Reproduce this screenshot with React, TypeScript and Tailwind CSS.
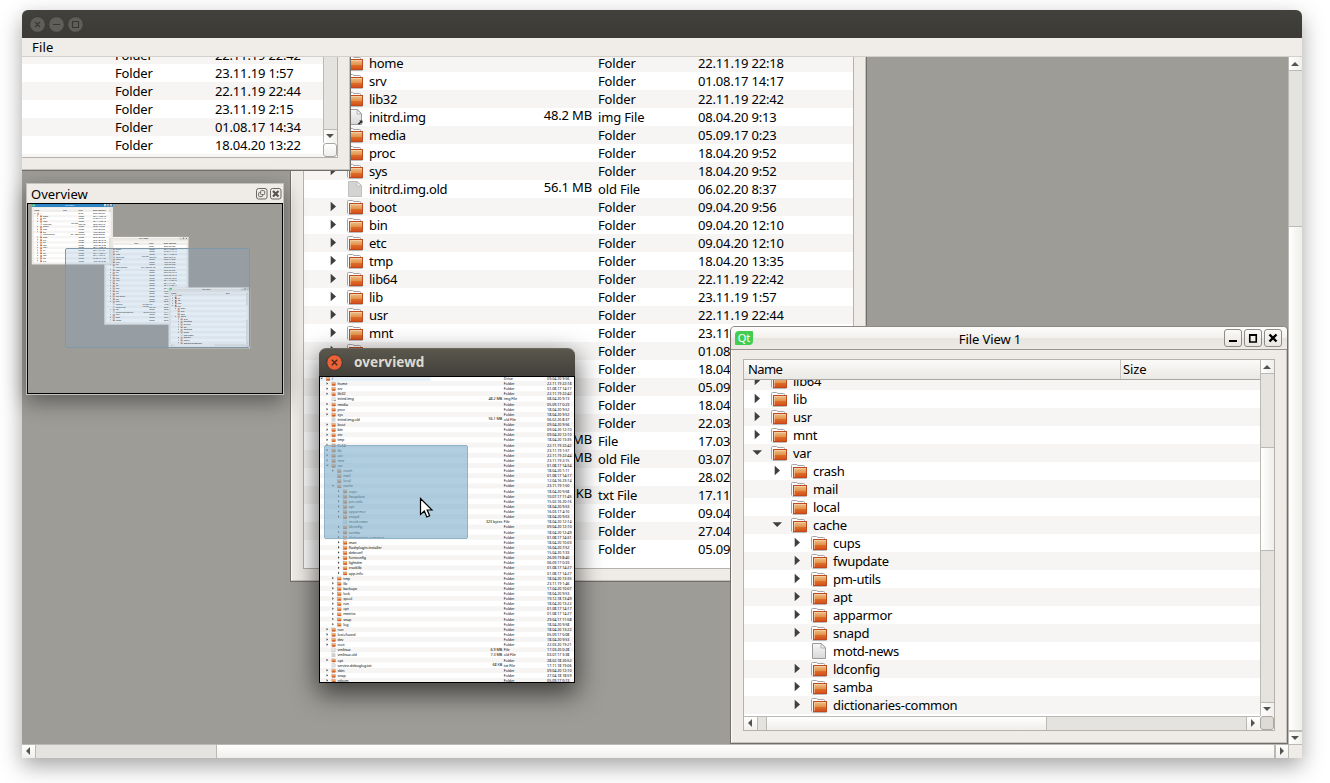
import React from "react";

type Kind = "folder" | "file" | "link" | "broken";
type Item = {
  name: string;
  date: string;
  level: number;
  kind: Kind;
  size: string;
  type: string;
  arrow: "closed" | "open" | "none";
};

function dir(name: string, date: string, level = 1, arrow: Item["arrow"] = "closed"): Item {
  return { name, date, level, kind: "folder", size: "", type: name === "/" ? "Drive" : "Folder", arrow };
}
function file(name: string, date: string, size: string, type: string, kind: Kind = "file", level = 1): Item {
  return { name, date, level, kind, size, type, arrow: "none" };
}

const head: Item[] = [
  dir("/", "09.04.20 9:56", 0, "open"),
  dir("home", "22.11.19 22:18"),
  dir("srv", "01.08.17 14:17"),
  dir("lib32", "22.11.19 22:42"),
  file("initrd.img", "08.04.20 9:13", "48.2 MB", "img File", "link"),
  dir("media", "05.09.17 0:23"),
  dir("proc", "18.04.20 9:52"),
  dir("sys", "18.04.20 9:52"),
  file("initrd.img.old", "06.02.20 8:37", "56.1 MB", "old File", "broken"),
  dir("boot", "09.04.20 9:56"),
  dir("bin", "09.04.20 12:10"),
  dir("etc", "09.04.20 12:10"),
  dir("tmp", "18.04.20 13:35"),
  dir("lib64", "22.11.19 22:42"),
  dir("lib", "23.11.19 1:57"),
  dir("usr", "22.11.19 22:44"),
  dir("mnt", "23.11.19 2:15"),
];

const varChildren: Item[] = [
  dir("crash", "18.04.20 1:11", 2),
  dir("mail", "01.08.17 14:17", 2, "none"),
  dir("local", "12.04.16 23:14", 2, "none"),
  dir("cache", "23.11.19 1:50", 2, "open"),
  dir("cups", "18.04.20 9:58", 3),
  dir("fwupdate", "10.07.17 11:45", 3),
  dir("pm-utils", "15.02.16 20:16", 3),
  dir("apt", "18.04.20 9:53", 3),
  dir("apparmor", "16.03.17 4:10", 3),
  dir("snapd", "18.04.20 9:53", 3),
  file("motd-news", "18.04.20 12:14", "323 bytes", "File", "file", 3),
  dir("ldconfig", "09.04.20 12:10", 3),
  dir("samba", "18.04.20 12:49", 3),
  dir("dictionaries-common", "01.08.17 14:31", 3),
  dir("man", "18.04.20 10:03", 3),
  dir("flashplugin-installer", "16.04.20 7:52", 3),
  dir("debconf", "15.04.20 7:33", 3),
  dir("fontconfig", "26.09.19 8:40", 3),
  dir("lightdm", "06.09.17 0:33", 3),
  dir("cracklib", "01.08.17 14:27", 3),
  dir("app-info", "01.08.17 14:27", 3),
  dir("tmp", "18.04.20 13:35", 2),
  dir("lib", "23.11.19 1:46", 2),
  dir("backups", "17.04.20 10:07", 2),
  dir("lock", "18.04.20 9:53", 2),
  dir("spool", "19.12.18 13:49", 2),
  dir("run", "18.04.20 13:22", 2),
  dir("opt", "01.08.17 14:17", 2),
  dir("metrics", "01.08.17 14:27", 2),
  dir("snap", "29.04.17 11:58", 2),
  dir("log", "18.04.20 9:58", 2),
];

const tail: Item[] = [
  dir("run", "18.04.20 13:22"),
  dir("lost+found", "05.09.17 0:08"),
  dir("dev", "18.04.20 9:53"),
  dir("root", "22.03.20 19:21"),
  file("vmlinuz", "17.03.20 0:28", "6.9 MB", "File"),
  file("vmlinuz.old", "03.07.17 3:38", "7.3 MB", "old File", "broken"),
  dir("opt", "28.02.18 20:52"),
  file("service-debuglog.txt", "17.11.18 19:06", "68 KB", "txt File"),
  dir("sbin", "09.04.20 12:10"),
  dir("snap", "27.04.18 18:59"),
  dir("cdrom", "05.09.17 0:13"),
];

const collapsed: Item[] = [...head, dir("var", "01.08.17 14:34"), ...tail];
const expanded: Item[] = [...head, dir("var", "01.08.17 14:34", 1, "open"), ...varChildren, ...tail];

function Gradients() {
  return (
    <svg width="0" height="0" className="absolute">
      <defs>
        <linearGradient id="folderFront" x1="0" y1="0" x2="0" y2="1">
          <stop offset="0" stopColor="#efc28c" />
          <stop offset="0.5" stopColor="#e2954f" />
          <stop offset="0.58" stopColor="#db6f2a" />
          <stop offset="1" stopColor="#d84a18" />
        </linearGradient>
        <linearGradient id="paper" x1="0" y1="0" x2="0" y2="1">
          <stop offset="0" stopColor="#f7f7f7" />
          <stop offset="1" stopColor="#d8d8d8" />
        </linearGradient>
      </defs>
    </svg>
  );
}

function ItemIcon({ kind }: { kind: Kind }) {
  if (kind === "folder") {
    return (
      <svg width="16" height="18" viewBox="0 -2 16 18" className="shrink-0">
        <path d="M1.5 14.5 H15.5" stroke="#8f8f8f" strokeOpacity="0.6" />
        <path d="M0.5 13.5 V1.5 Q0.5 0.5 1.5 0.5 H5.5 L7 1.5 H12.5 Q13.5 1.5 13.5 2.5 V4" fill="#fdfdfd" stroke="#a3a3a3" />
        <rect x="2.5" y="3.5" width="13" height="10" fill="url(#folderFront)" stroke="#c04a20" />
        <path d="M3.5 13 V4.5 H15" fill="none" stroke="#f6dfc0" strokeOpacity="0.55" />
      </svg>
    );
  }
  return (
    <svg width="16" height="16" viewBox="0 0 16 16" className="shrink-0">
      <path
        d="M1.5 0.5 H10.5 L14.5 4.5 V15.5 H1.5 Z"
        fill={kind === "broken" ? "#d3d3d1" : "url(#paper)"}
        stroke={kind === "broken" ? "#c0c0be" : "#9b9b9b"}
      />
      <path d="M10 0.5 L10 5 H14.5 Z" fill="#f4f4f4" stroke={kind === "broken" ? "#bbb" : "#a2a2a2"} strokeWidth="0.8" />
      {kind === "link" && <path d="M10.5 15 L13.2 12.4 L12.2 11.4 H15.5 V14.5 L14.4 13.5 L12.4 15.4 Z" fill="#2a2a2a" />}
    </svg>
  );
}

function RowArrow({ state }: { state: Item["arrow"] }) {
  return (
    <svg width="16" height="18" viewBox="0 0 16 18" className="shrink-0">
      {state === "closed" && <path d="M5.7 3.8 L11 8.5 L5.7 13.2 Z" fill="#3f3f3f" />}
      {state === "open" && <path d="M3.5 6.2 H13 L8.2 11 Z" fill="#3f3f3f" />}
    </svg>
  );
}

type TreeProps = { items: Item[]; typeX: number; dateX: number; selectRoot?: number };

function Tree({ items, typeX, dateX, selectRoot }: TreeProps) {
  return (
    <div className="text-[13px] leading-[18px] text-black">
      {items.map((it, i) => (
        <div key={i} className={i % 2 === 1 ? "flex h-[18px] bg-[#f6f5f4]" : "flex h-[18px] bg-white"}>
          <div
            className={
              i === 0 && selectRoot
                ? "flex h-[18px] shrink-0 items-center gap-[6px] bg-[#e6f0f8]"
                : "flex h-[18px] shrink-0 items-center gap-[6px]"
            }
            style={{ width: selectRoot && i === 0 ? selectRoot : typeX - 76, paddingLeft: 1 + it.level * 20 }}
          >
            <RowArrow state={it.arrow} />
            <ItemIcon kind={it.kind} />
            <span className="whitespace-nowrap tracking-[-0.28px]">{it.name}</span>
          </div>
          <div
            className="-mt-[2px] shrink-0 whitespace-nowrap text-right tracking-[-0.15px]"
            style={{ width: selectRoot && i === 0 ? typeX - 6 - selectRoot : 70 }}
          >
            {it.size}
          </div>
          <div className="ml-[6px] shrink-0 whitespace-nowrap tracking-[-0.17px]" style={{ width: dateX - typeX }}>
            {it.type}
          </div>
          <div className="shrink-0 whitespace-nowrap tracking-[-0.17px]">{it.date}</div>
        </div>
      ))}
    </div>
  );
}

const arrowPaths = {
  up: "M2 9 H10 L6 5 Z",
  down: "M2 4 H10 L6 8 Z",
  left: "M8 2 V10 L4 6 Z",
  right: "M4 2 V10 L8 6 Z",
};

function BarArrow({ to }: { to: keyof typeof arrowPaths }) {
  return (
    <svg width="13" height="13" viewBox="0 0 13 13" className="shrink-0">
      <path d={arrowPaths[to]} fill="#555350" />
    </svg>
  );
}

function VBar({ before, handle }: { before: number; handle: number }) {
  return (
    <div className="flex min-h-0 w-[14px] flex-1 flex-col border-l border-[#bbb9b4] bg-[#e4e3df]">
      <div className="h-[13px] shrink-0 bg-gradient-to-r from-white to-[#f0efec]">
        <BarArrow to="up" />
      </div>
      <div className="shrink-0 border-t border-[#bbb9b4]" style={{ height: before }} />
      <div
        className="shrink-0 border-t border-[#bbb9b4] bg-gradient-to-r from-white to-[#f0eeeb]"
        style={{ height: handle }}
      />
      <div className="flex-1 border-t border-[#bbb9b4]" />
      <div className="h-[14px] shrink-0 border-t border-[#bbb9b4] bg-gradient-to-r from-white to-[#f0efec]">
        <BarArrow to="down" />
      </div>
    </div>
  );
}

function HBar({ before, handle }: { before: number; handle: number }) {
  return (
    <div className="flex h-[14px] min-w-0 flex-1 border-t border-[#bbb9b4] bg-[#e4e3df]">
      <div className="w-[13px] shrink-0 bg-gradient-to-b from-white to-[#f0efec]">
        <BarArrow to="left" />
      </div>
      <div className="shrink-0 border-l border-[#bbb9b4]" style={{ width: before }} />
      <div
        className="shrink-0 border-l border-[#bbb9b4] bg-gradient-to-b from-white to-[#f0eeeb]"
        style={{ width: handle }}
      />
      <div className="flex-1 border-l border-[#bbb9b4]" />
      <div className="w-[14px] shrink-0 border-l border-[#bbb9b4] bg-gradient-to-b from-white to-[#f0efec]">
        <BarArrow to="right" />
      </div>
    </div>
  );
}

function CaptionButton({ d, width }: { d: string; width: number }) {
  return (
    <div className="flex h-[18px] w-[18px] items-center justify-center rounded-[3px] border border-[#8f8c87] bg-gradient-to-b from-[#fbfaf9] to-[#e9e6e1]">
      <svg width="16" height="16" viewBox="0 0 16 16">
        <path d={d} fill="none" stroke="#000" strokeWidth={width} />
      </svg>
    </div>
  );
}

type WindowProps = TreeProps & {
  title: string;
  x: number;
  y: number;
  w: number;
  h: number;
  nameW: number;
  listY: number;
  scrollX?: number;
  active?: boolean;
  vbar?: [number, number];
  hbar?: [number, number];
};

function HeaderCell({ text, w }: { text: string; w: number }) {
  return (
    <div
      className="shrink-0 overflow-hidden whitespace-nowrap border-l border-[#c9c6c2] pl-[2px] tracking-[-0.1px]"
      style={{ width: w }}
    >
      {text}
    </div>
  );
}

function FileWindow(p: WindowProps) {
  return (
    <div
      className="absolute flex flex-col rounded-t-[5px] border border-[#716e6c] border-t-[#8d8a86] bg-[#efebe7]"
      style={{ left: p.x, top: p.y, width: p.w, height: p.h }}
    >
      <div
        className={
          p.active
            ? "flex h-[23px] shrink-0 items-center rounded-t-[4px] border-b border-[#1d6ea8] bg-[#2f86c4] pl-[4px] pr-[5px] text-white"
            : "flex h-[23px] shrink-0 items-center rounded-t-[4px] border-b border-[#979490] bg-[linear-gradient(#fefdfc,#f3f0ed_48%,#e8e5e0_52%,#edeae6)] pl-[4px] pr-[5px]"
        }
      >
        <div className="-mt-[1px] flex h-[14px] w-[18px] items-center justify-center rounded-[1px] rounded-br-[4px] rounded-tl-[4px] bg-[#41cd52] text-[11px] leading-[14px] text-white">
          Qt
        </div>
        <div className="ml-[3px] mt-[1px] flex-1 text-center text-[13px] leading-[18px] tracking-[-0.1px]">{p.title}</div>
        <div className="flex gap-[2px]">
          <CaptionButton d="M4 11 H12" width={2} />
          <CaptionButton d="M4.75 4.75 H11.25 V12 H4.75 Z M4 5.2 H12" width={1.6} />
          <CaptionButton d="M4.5 4.5 L11.5 11.5 M11.5 4.5 L4.5 11.5" width={2.4} />
        </div>
      </div>
      <div className="flex min-h-0 flex-1 border-b border-l border-r border-[#c6c2be] border-l-[#fbfaf9] pb-[11px] pl-[11px] pr-[11px] pt-[9px]">
        <div className="flex min-w-0 flex-1 border border-[#b5b2ae] bg-white">
          <div className="flex min-w-0 flex-1 flex-col">
            <div className="flex h-[20px] shrink-0 overflow-hidden border-b border-[#aaa7a3] bg-gradient-to-b from-[#fcfaf8] to-[#ebe9e6] text-[13px] leading-[19px]">
              <div className="shrink-0 pl-[4px] tracking-[-0.6px]" style={{ width: p.nameW }}>
                Name
              </div>
              <HeaderCell text="Size" w={p.typeX - 4 - p.nameW} />
              <HeaderCell text="Type" w={p.dateX - p.typeX} />
              <HeaderCell text="Date Modified" w={200} />
            </div>
            <div className={p.hbar ? "mb-[2px] min-h-0 flex-1 overflow-hidden" : "min-h-0 flex-1 overflow-hidden"}>
              <div style={{ marginTop: p.listY, marginLeft: -(p.scrollX ?? 0) }}>
                <Tree items={p.items} typeX={p.typeX} dateX={p.dateX} />
              </div>
            </div>
            {p.hbar && (
              <div className="flex shrink-0">
                <HBar before={p.hbar[0]} handle={p.hbar[1]} />
              </div>
            )}
          </div>
          {p.vbar && (
            <div className="flex w-[14px] shrink-0 flex-col">
              <VBar before={p.vbar[0]} handle={p.vbar[1]} />
              <div
                className={
                  p.hbar
                    ? "h-[14px] shrink-0 rounded-[3px] border border-[#a9a6a2] bg-[#dedbd7]"
                    : "h-[14px] shrink-0 rounded-[3px] border border-[#a9a6a2] bg-gradient-to-b from-white to-[#f0efec]"
                }
              />
            </div>
          )}
        </div>
      </div>
    </div>
  );
}

function Workspace() {
  return (
    <>
      <FileWindow title="File View 3" x={268} y={-78} w={577} h={603} items={collapsed} nameW={190} typeX={294} dateX={394} listY={3} />
      <FileWindow
        title="File View 2"
        active
        x={-229}
        y={-304}
        w={558}
        h={418}
        items={collapsed}
        nameW={200}
        typeX={308}
        dateX={408}
        listY={5}
        vbar={[10, 180]}
      />
      <FileWindow
        title="File View 1"
        x={708}
        y={269}
        w={558}
        h={418}
        items={expanded}
        nameW={376}
        typeX={650}
        dateX={802}
        listY={-242}
        scrollX={16}
        vbar={[74, 103]}
        hbar={[9, 280]}
      />
    </>
  );
}

function OverviewDock() {
  return (
    <div className="absolute left-[26px] top-[183px] flex h-[212px] w-[258px] flex-col border border-[#c3c2bd] bg-[#efebe7] shadow-[0_7px_20px_rgba(0,0,0,0.42)]">
      <div className="flex h-[19px] items-center pl-[4px] pr-[1px]">
        <div className="flex-1 text-[13px] leading-[18px]">Overview</div>
        <svg width="26" height="12" viewBox="0 0 26 12" className="mt-[1px]" fill="none" stroke="#6a6865">
          <rect x="0.5" y="0.5" width="10.5" height="10.5" rx="2" />
          <rect x="4.6" y="2.6" width="4" height="4" rx="0.8" />
          <path d="M4.6 4.6 H3.4 Q2.6 4.6 2.6 5.4 V7.8 Q2.6 8.6 3.4 8.6 H5.8 Q6.6 8.6 6.6 7.8 V6.6" />
          <rect x="14.5" y="0.5" width="10.5" height="10.5" rx="2" />
          <path d="M17 3 L22.5 8.5 M22.5 3 L17 8.5" strokeWidth="2.2" stroke="#55534f" />
        </svg>
      </div>
      <div className="relative flex-1 overflow-hidden border border-black bg-[#9e9c97]">
        <div className="absolute left-[37px] top-[44px] h-[687px] w-[1266px] origin-top-left scale-[0.1463]">
          <Workspace />
        </div>
        <div className="absolute left-[37px] top-[44px] h-[100px] w-[185px] rounded-[2px] border border-[#7f97a6] bg-[rgba(125,170,210,0.22)]" />
      </div>
    </div>
  );
}

function OverviewWindow() {
  return (
    <div className="absolute left-[319px] top-[348px] flex h-[335px] w-[256px] flex-col rounded-t-[7px] shadow-[0_9px_26px_2px_rgba(0,0,0,0.6)]">
      <div className="flex h-[28px] shrink-0 items-center rounded-t-[7px] border-t border-[#6b685e] bg-gradient-to-b from-[#5a574d] to-[#42403a] pl-[7px]">
        <svg width="17" height="17" viewBox="0 0 17 17">
          <circle cx="8.5" cy="8.5" r="7.7" fill="#ec6236" stroke="#35332d" strokeWidth="0.8" />
          <path d="M5.8 5.8 L11.2 11.2 M11.2 5.8 L5.8 11.2" stroke="#3d2a20" strokeWidth="1.3" />
        </svg>
        <div className="mb-[2px] ml-[11px] text-[13.5px] font-bold leading-[18px] tracking-[0.1px] text-[#dfdbd2]">
          overviewd
        </div>
      </div>
      <div className="relative flex-1 overflow-hidden border border-black bg-white">
        <div className="absolute -left-[1px] -top-[1px] w-[900px] origin-top-left scale-[0.2844]">
          <Tree items={expanded} typeX={650} dateX={802} selectRoot={392} />
        </div>
        <div className="absolute left-[4px] top-[68px] h-[94px] w-[144px] rounded-[2px] border border-[#8fb3c8] bg-[rgba(127,176,205,0.62)]" />
      </div>
    </div>
  );
}

function TitleButtons() {
  return (
    <svg width="60" height="17" viewBox="0 0 60 17">
      {[8.5, 27.5, 46.5].map((cx) => (
        <circle key={cx} cx={cx} cy="8.5" r="7.7" fill="#5f5e58" stroke="#35342f" strokeWidth="0.5" />
      ))}
      <path d="M6 6 L11 11 M11 6 L6 11 M24 8.5 H31 M43.5 5.5 H49.5 V11.5 H43.5 Z" fill="none" stroke="#383731" strokeWidth="1.1" />
    </svg>
  );
}

export default function App() {
  return (
    <div className="relative h-[783px] w-[1330px] overflow-hidden bg-white pl-[22px] pt-[10px] font-['Noto_Sans',sans-serif] text-black">
      <Gradients />
      <div className="flex h-[748px] w-[1280px] flex-col rounded-t-[6px] bg-[#efebe7] shadow-[0_8px_22px_rgba(0,0,0,0.36)]">
        <div className="flex h-[28px] shrink-0 items-center rounded-t-[6px] bg-gradient-to-b from-[#42413c] to-[#3b3a36] pl-[7px] pt-[1px]">
          <TitleButtons />
        </div>
        <div className="h-[19px] shrink-0 border-b border-[#d3d0cc] bg-[#f0ece7] pl-[10px] text-[13px] leading-[19px] tracking-[0.15px]">
          File
        </div>
        <div className="flex min-h-0 flex-1">
          <div className="relative w-[1266px] overflow-hidden bg-[#9e9c97]">
            <Workspace />
          </div>
          <div className="flex flex-col">
            <VBar before={156} handle={504} />
          </div>
        </div>
        <div className="flex h-[14px] shrink-0">
          <HBar before={181} handle={1058} />
          <div className="w-[14px] border-l border-t border-[#bbb9b4]" />
        </div>
      </div>
      <OverviewDock />
      <OverviewWindow />
      <svg width="15" height="22" viewBox="0 0 15 22" className="absolute left-[419px] top-[497px]">
        <path
          d="M1.5 1.5 V17.5 L5.3 14 L7.8 20 L10.6 18.8 L8.2 13 H13 Z"
          fill="#fff"
          stroke="#000"
          strokeWidth="1.2"
        />
      </svg>
    </div>
  );
}
